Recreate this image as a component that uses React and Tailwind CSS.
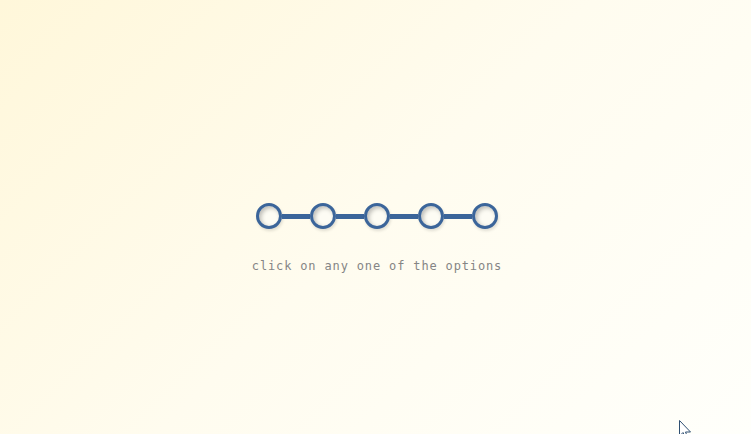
import React from 'react';

const Dot = () => (
  <button className="w-[26px] h-[26px] rounded-full border-[3px] border-[#3b659a] bg-[#fdfcf4] shadow-[inset_2px_2px_4px_rgba(0,0,0,0.25),1px_2px_3px_rgba(0,0,0,0.12)] shrink-0" />
);

const Bar = () => <div className="w-[28px] h-[5px] bg-[#3b659a] shrink-0" />;

const App = () => {
  const options = [0, 1, 2, 3, 4];
  return (
    <div className="relative w-full h-[434px] overflow-hidden bg-[linear-gradient(135deg,#fff7da_0%,#fffcef_50%,#fffffb_100%)]">
      <div className="flex flex-col items-center pt-[203px] pl-[3px]">
        <div className="flex items-center">
          {options.map((i) => (
            <React.Fragment key={i}>
              {i > 0 && <Bar />}
              <Dot />
            </React.Fragment>
          ))}
        </div>
        <p
          className="mt-[29px] text-[12px] leading-[16px] tracking-[0.85px] text-[#858585]"
          style={{ fontFamily: '"DejaVu Sans Mono", monospace' }}
        >
          click on any one of the options
        </p>
      </div>
      {/* mouse pointer */}
      <svg className="absolute left-[679px] top-[420px]" width="14" height="20" viewBox="0 0 14 20">
        <path d="M0.5 0.5 L0.5 16 L4 12.5 L7 19 L9 18 L6.5 12 L11.5 12 Z" fill="#fff" stroke="#2f4f72" strokeWidth="1" />
      </svg>
    </div>
  );
};

export default App;
